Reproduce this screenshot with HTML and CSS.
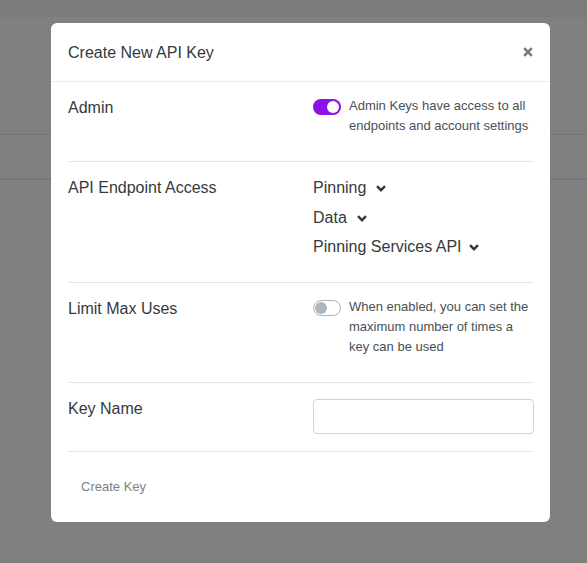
FILE: index.html
```html
<!DOCTYPE html>
<html lang="en">
<head>
<meta charset="utf-8">
<title>Create New API Key</title>
<link rel="stylesheet" href="styles.css">
</head>
<body>
<div class="page">
  <div class="page-top"></div>
  <div class="page-line-a"></div>
  <div class="page-line-b"></div>
</div>

<div class="modal">
  <div class="modal-header">
    <h5 class="modal-title">Create New API Key</h5>
    <svg class="close" width="10" height="10" viewBox="0 0 10 10" aria-label="Close">
      <path d="M1.2 1.2 L8.8 8.8 M8.8 1.2 L1.2 8.8" stroke="#7a7a7a" stroke-width="2.6" stroke-linecap="butt" fill="none"/>
    </svg>
  </div>

  <div class="row">
    <div class="label">Admin</div>
    <div class="switch-group">
      <span class="switch on"><span class="knob"></span></span>
      <p class="desc">Admin Keys have access to all endpoints and account settings</p>
    </div>
  </div>

  <div class="row">
    <div class="label">API Endpoint Access</div>
    <ul class="dropdowns">
      <li class="dd">Pinning <svg class="chev" width="10" height="7" viewBox="0 0 10 7"><path d="M1 1.2 L5 5.2 L9 1.2" stroke="#343a40" stroke-width="2.4" fill="none"/></svg></li>
      <li class="dd">Data <svg class="chev" width="10" height="7" viewBox="0 0 10 7"><path d="M1 1.2 L5 5.2 L9 1.2" stroke="#343a40" stroke-width="2.4" fill="none"/></svg></li>
      <li class="dd tight">Pinning Services API <svg class="chev" width="10" height="7" viewBox="0 0 10 7"><path d="M1 1.2 L5 5.2 L9 1.2" stroke="#343a40" stroke-width="2.4" fill="none"/></svg></li>
    </ul>
  </div>

  <div class="row">
    <div class="label">Limit Max Uses</div>
    <div class="switch-group">
      <span class="switch off"><span class="knob"></span></span>
      <p class="desc">When enabled, you can set the maximum number of times a key can be used</p>
    </div>
  </div>

  <div class="row last">
    <div class="label">Key Name</div>
    <input class="text-input" type="text" aria-label="Key Name">
  </div>

  <div class="modal-footer">
    <button class="btn" type="button">Create Key</button>
  </div>
</div>
</body>
</html>
```

FILE: styles.css
```css
html, body {
  margin: 0;
  padding: 0;
}

body {
  background: #808080;
  font-family: "Liberation Sans", Arial, Helvetica, sans-serif;
  color: #343a40;
  height: 563px;
  overflow: hidden;
}

.page-top {
  height: 17px;
  background: #7b7b7b;
}

.page-line-a {
  margin-top: 117px;
  height: 1px;
  background: #767676;
}

.page-line-b {
  margin-top: 43px;
  height: 2px;
  background: #75757a;
}

.modal {
  position: absolute;
  left: 51px;
  top: 23px;
  width: 499px;
  background: #ffffff;
  border-radius: 6px;
}

.modal-header {
  display: flex;
  justify-content: space-between;
  align-items: center;
  height: 58px;
  box-sizing: border-box;
  padding: 18px 17px 16px;
  border-bottom: 1px solid #e9ecef;
  box-sizing: content-box;
  height: 24px;
}

.modal-title {
  margin: 0;
  font-size: 16px;
  font-weight: normal;
  line-height: 24px;
  color: #343a40;
}

.close {
  display: block;
  margin-top: -3px;
}

.row {
  display: grid;
  grid-template-columns: 245px 1fr;
  margin: 0 17px;
  padding: 14px 0 17px;
  border-bottom: 1px solid #e1e4e7;
}

.label {
  font-size: 16px;
  line-height: 24px;
  color: #343a40;
}

.switch-group {
  display: flex;
  align-items: flex-start;
  gap: 8px;
  margin-bottom: 8px;
}

.switch {
  flex: none;
  position: relative;
  width: 28px;
  height: 16px;
  margin-top: 3px;
  border-radius: 8px;
  box-sizing: border-box;
}

.switch .knob {
  position: absolute;
  top: 2px;
  width: 12px;
  height: 12px;
  border-radius: 50%;
}

.switch.on {
  background: #8a12e8;
}

.switch.on .knob {
  right: 2px;
  background: #ffffff;
}

.switch.off {
  background: #ffffff;
  border: 1px solid #adb5bd;
}

.switch.off .knob {
  top: 1px;
  left: 1px;
  background: #adb5bd;
}

.desc {
  margin: 0;
  font-size: 13px;
  line-height: 20px;
  color: #495057;
}

.dropdowns {
  list-style: none;
  margin: 0 0 6px;
  padding: 0;
  display: flex;
  flex-direction: column;
  gap: 5.5px;
}

.dd {
  display: flex;
  align-items: center;
  gap: 10px;
  font-size: 16px;
  line-height: 24px;
  color: #343a40;
}

.dd.tight {
  gap: 7px;
}

.chev {
  display: block;
  margin-top: 1px;
}

.text-input {
  display: block;
  margin-top: 2px;
  width: 221px;
  height: 35px;
  box-sizing: border-box;
  border: 1px solid #ced4da;
  border-radius: 4px;
  background: #ffffff;
  font-family: inherit;
  font-size: 14px;
  padding: 0 10px;
}

.modal-footer {
  padding: 17px 17px 17px;
}

.btn {
  display: block;
  border: none;
  background: transparent;
  padding: 8px 13px;
  font-family: inherit;
  font-size: 13px;
  line-height: 20px;
  color: #7a7f85;
}
```
